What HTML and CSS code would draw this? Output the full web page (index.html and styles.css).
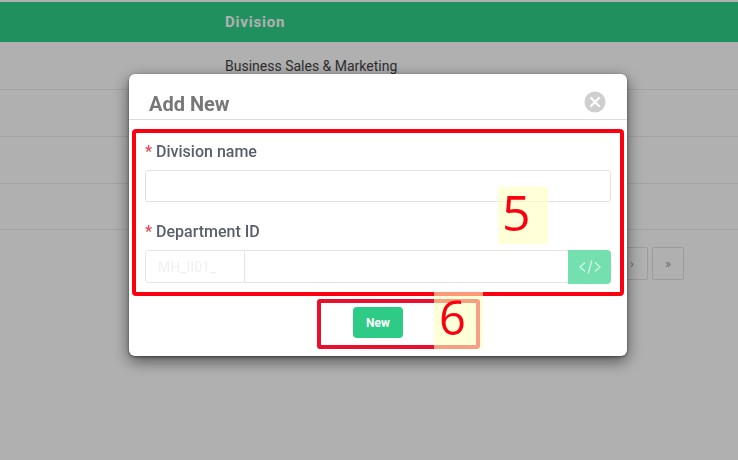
FILE: index.html
```html
<!DOCTYPE html>
<html lang="en">
<head>
<meta charset="utf-8">
<title>Add New</title>
<link rel="stylesheet" href="styles.css">
</head>
<body>
<main class="page">
  <div class="table-head">Division</div>
  <div class="row row-first">Business Sales &amp; Marketing</div>
  <div class="row"></div>
  <div class="row"></div>
  <div class="row row-short"></div>
  <nav class="pager">
    <span class="page-btn">‹</span>
    <span class="page-btn">›</span>
    <span class="page-btn">»</span>
  </nav>
</main>
<div class="backdrop"></div>
<section class="modal">
  <header class="modal-head">
    <h2 class="modal-title">Add New</h2>
    <svg class="close" width="22" height="22" viewBox="0 0 22 22">
      <circle cx="11" cy="11" r="10.500" fill="#cfcfcf"/>
      <path d="M7 7l8 8M15 7l-8 8" stroke="#fff" stroke-width="2.200" stroke-linecap="round"/>
    </svg>
  </header>
  <form class="form">
    <div class="field">
      <label class="label"><span class="req">*</span> Division name</label>
      <input class="input" type="text">
    </div>
    <div class="field">
      <label class="label"><span class="req">*</span> Department ID</label>
      <div class="group">
        <span class="prefix">MH_II01_</span>
        <input class="group-input" type="text">
        <span class="code-btn">
          <svg width="24" height="20" viewBox="0 0 24 20" fill="none" stroke="#d3f5e4" stroke-width="1.300">
            <path d="M7 5.500L2 10l5 4.500M17 5.500l5 4.500-5 4.500M13.800 3.500L10.200 16.500"/>
          </svg>
        </span>
      </div>
    </div>
  </form>
  <footer class="modal-foot">
    <button class="new-btn" type="button">New</button>
  </footer>
</section>
<div class="mark mark-box-five"></div>
<div class="mark mark-box-six"></div>
<div class="mark tag tag-five">5</div>
<div class="mark tag tag-six">6</div>
</body>
</html>
```
FILE: styles.css
```css
* { box-sizing: border-box; }
html, body { margin: 0; height: 100%; }
body {
  width: 738px;
  height: 460px;
  overflow: hidden;
  background: #fff;
  font-family: Roboto, "Liberation Sans", sans-serif;
}
.page { padding-top: 2px; }
.table-head {
  height: 40px;
  padding-left: 225px;
  background: #2fd289;
  color: #fff;
  font-size: 15px;
  font-weight: 700;
  letter-spacing: 0.800px;
  line-height: 40px;
}
.row {
  height: 47px;
  padding-left: 225px;
  border-bottom: 1px solid #ececec;
  color: #444;
  font-size: 14px;
  line-height: 48px;
}
.row-first { height: 48px; }
.row-short { height: 46px; }
.pager {
  display: flex;
  justify-content: flex-end;
  gap: 4px;
  margin-top: 17px;
  padding-right: 54px;
}
.page-btn {
  display: flex;
  align-items: center;
  justify-content: center;
  width: 32px;
  height: 33px;
  border: 1px solid #e3e3e3;
  border-radius: 2px;
  color: #999;
  font-size: 13px;
}
.backdrop {
  position: fixed;
  inset: 0;
  background: rgba(0, 0, 0, 0.31);
}
.modal {
  position: fixed;
  top: 74px;
  left: 129px;
  width: 498px;
  height: 282px;
  background: #fff;
  border-radius: 6px;
  box-shadow: 0 1px 3px rgba(0, 0, 0, 0.45), 0 5px 16px rgba(0, 0, 0, 0.55);
}
.modal-head {
  display: flex;
  align-items: center;
  justify-content: space-between;
  height: 46px;
  padding: 12px 21px 0 20px;
  border-bottom: 1px solid #dcdcdc;
}
.modal-title {
  margin: 3px 0 0;
  color: #777;
  font-size: 20px;
  font-weight: 700;
}
.close { margin-top: -2px; }
.form {
  display: flex;
  flex-direction: column;
  gap: 18px;
  padding: 20px 16px 0;
}
.label {
  display: block;
  padding-top: 1px;
  height: 22px;
  margin-bottom: 8px;
  color: #5a5e6b;
  font-size: 16px;
  font-weight: 500;
  line-height: 22px;
}
.req { color: #f04050; }
.input {
  display: block;
  width: 100%;
  height: 32px;
  border: 1px solid #e2e2e2;
  border-radius: 3px;
  background: #fff;
}
.group {
  display: flex;
  height: 34px;
}
.prefix {
  width: 100px;
  height: 33px;
  padding-left: 12px;
  border: 1px solid #e6e6e6;
  border-radius: 3px 0 0 3px;
  color: #f0f0f0;
  font-size: 14px;
  line-height: 32px;
}
.group-input {
  flex: 1;
  min-width: 0;
  height: 33px;
  border: 1px solid #e2e2e2;
  border-width: 1px 0;
  background: #fff;
}
.code-btn {
  display: flex;
  align-items: center;
  justify-content: center;
  width: 43px;
  background: #74e0b0;
  border-radius: 0 4px 4px 0;
}
.modal-foot {
  display: flex;
  justify-content: center;
  margin-top: 23px;
}
.new-btn {
  width: 50px;
  height: 31px;
  padding: 0;
  border: 0;
  border-radius: 4px;
  background: #2ecb87;
  color: #fff;
  font-family: inherit;
  font-size: 12px;
  font-weight: 700;
}
.mark { position: fixed; }
.mark-box-five {
  top: 129px;
  left: 132px;
  width: 492px;
  height: 167px;
  border: 4px solid #fb0010;
  border-radius: 4px;
}
.mark-box-six {
  top: 299px;
  left: 317px;
  width: 163px;
  height: 50px;
  border: 4px solid #e8102c;
  border-radius: 3px;
}
.tag {
  display: flex;
  align-items: flex-start;
  background: rgba(255, 255, 190, 0.6);
  color: #fb0010;
  font-family: "Open Sans", sans-serif;
  font-weight: 400;
  line-height: 50px;
}
.tag-five {
  top: 187px;
  left: 498px;
  width: 50px;
  height: 57px;
  padding-left: 4px;
  font-size: 50px;
}
.tag-six {
  top: 292px;
  left: 434px;
  width: 49px;
  height: 57px;
  padding-left: 5px;
  font-size: 47px;
}
```
